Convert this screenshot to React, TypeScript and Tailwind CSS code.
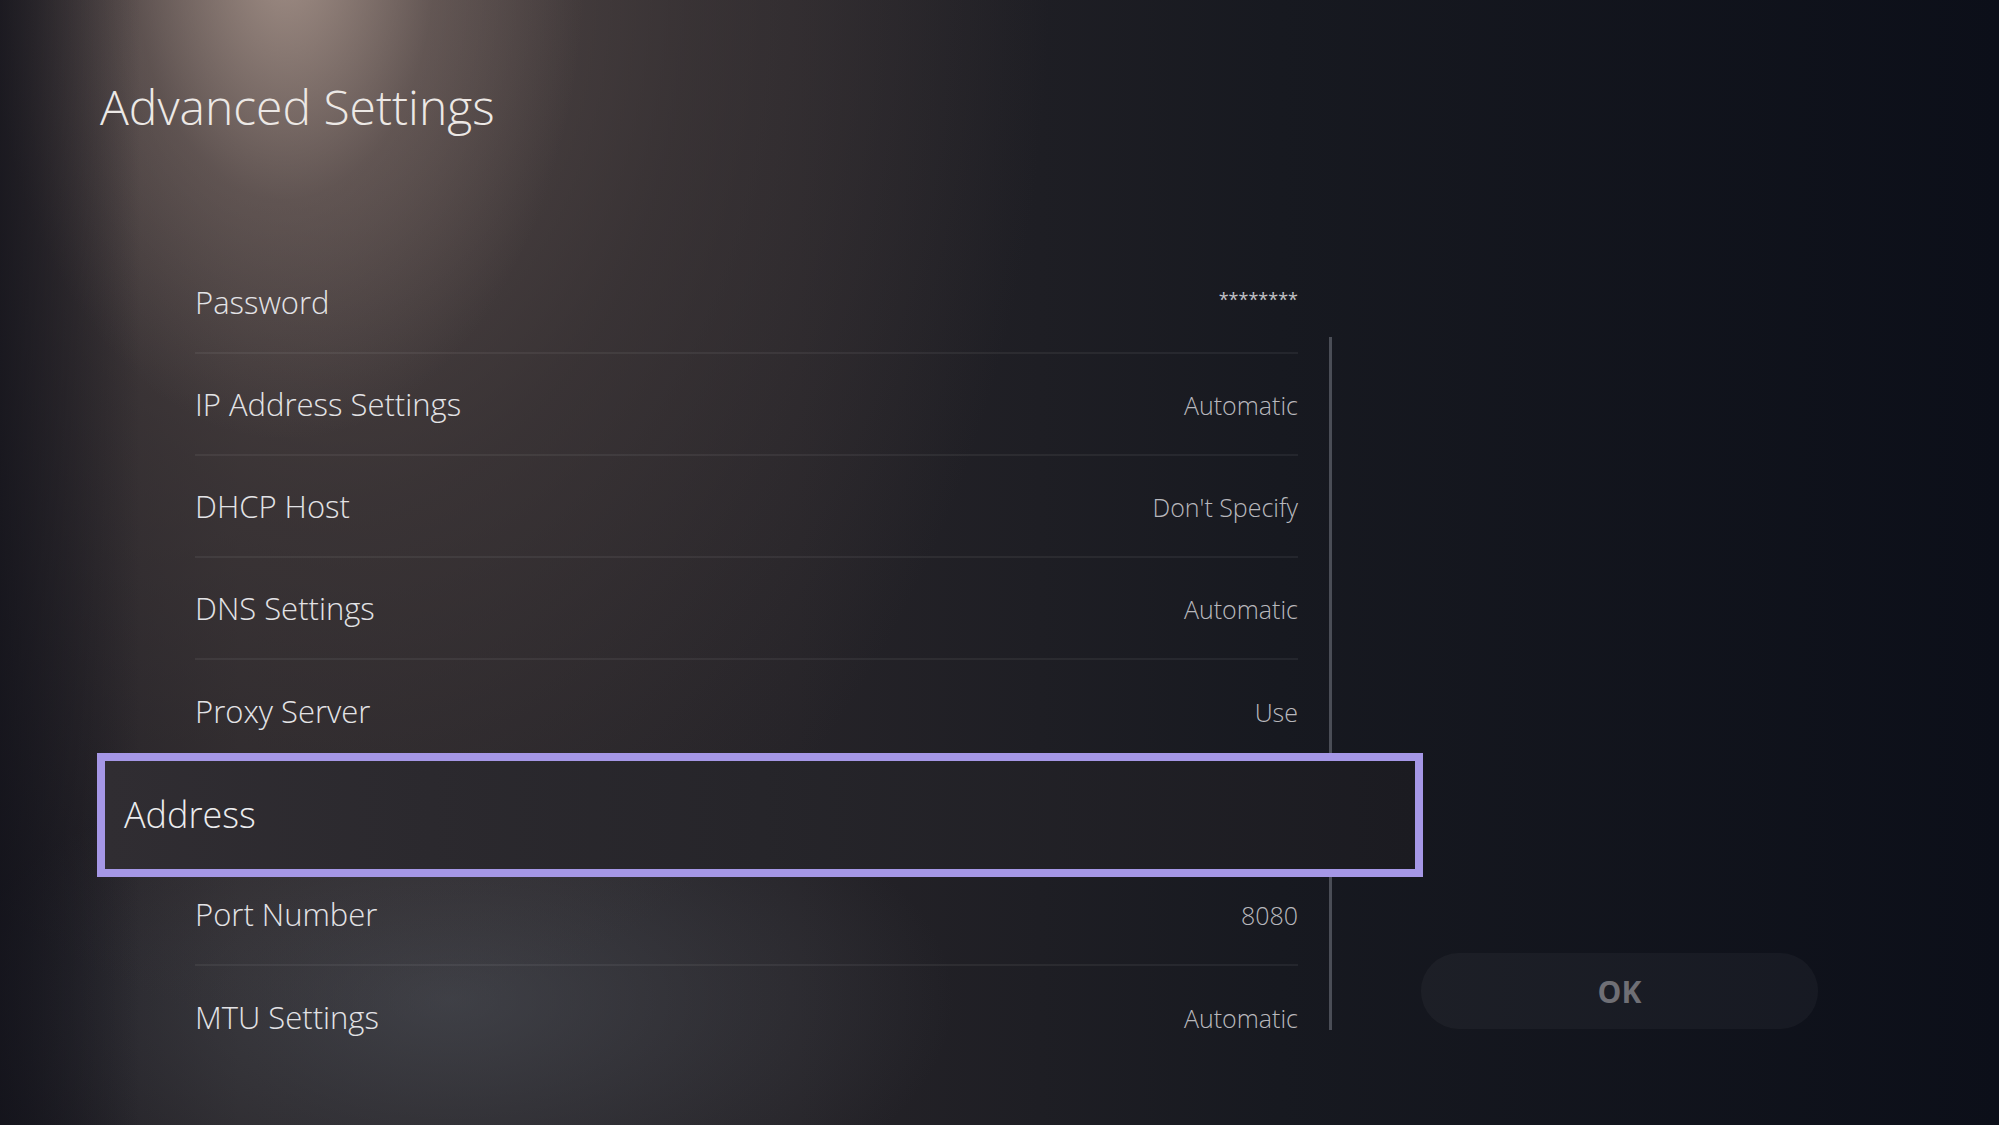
import React from 'react'

type Row = { label: string; value?: string; selected?: boolean; divider?: boolean }

const rows: Row[] = [
  { label: 'Password', value: '********', divider: true },
  { label: 'IP Address Settings', value: 'Automatic', divider: true },
  { label: 'DHCP Host', value: "Don't Specify", divider: true },
  { label: 'DNS Settings', value: 'Automatic', divider: true },
  { label: 'Proxy Server', value: 'Use' },
  { label: 'Address', selected: true },
  { label: 'Port Number', value: '8080', divider: true },
  { label: 'MTU Settings', value: 'Automatic' },
]

function SettingRow({ row }: { row: Row }) {
  if (row.selected) {
    return (
      <div className="relative z-10 -mt-[9px] -mb-[13px] flex h-[124px] items-center border-[8px] border-[#a597e6] bg-linear-to-r from-[#302d32] via-[#26252a] to-[#1b1b21] pl-[19px]">
        <span className="text-[36px] font-light text-[#ececee]">{row.label}</span>
      </div>
    )
  }
  const isMask = row.value === '********'
  return (
    <div className="h-[102px] pl-[98px] pr-[125px]">
      <div className={`flex h-full items-center justify-between ${row.divider ? 'border-b-2 border-white/[0.06]' : ''}`}>
        <span className="text-[31px] font-light text-[#e3e3e6]">{row.label}</span>
        {isMask ? (
          <span className="-mt-[6px] text-[18px] text-[#c4c4c8]">{row.value}</span>
        ) : (
          <span className="pt-[3px] text-[25px] font-light text-[#b8b8bd]">{row.value}</span>
        )}
      </div>
    </div>
  )
}

export default function App() {
  return (
    <div className="relative h-[1125px] w-[1999px] overflow-hidden bg-[linear-gradient(90deg,rgba(18,18,26,0.75)_0px,transparent_140px),radial-gradient(ellipse_300px_480px_at_285px_-40px,rgba(178,158,148,0.8)_0%,rgba(140,122,116,0.35)_50%,transparent_100%),radial-gradient(ellipse_720px_1050px_at_330px_-20px,rgba(96,83,80,0.8)_0%,rgba(72,63,63,0.55)_50%,transparent_100%),radial-gradient(ellipse_720px_360px_at_450px_1000px,rgba(82,86,94,0.55),transparent_70%),linear-gradient(90deg,#1d1c23_0%,#29262a_12%,#252328_40%,#171920_64%,#0c0f19_100%)] font-['Open_Sans','Noto_Sans',sans-serif]">
      <h1 className="pl-[100px] pt-[83px] text-[48px] font-light leading-none text-[#ece8e5]">
        Advanced Settings
      </h1>

      <div className="mt-[121px] flex">
        <div className="relative ml-[97px] w-[1326px]">
          {/* scroll track */}
          <div className="absolute left-[1232px] top-[85px] h-[693px] w-[3px] bg-[#4a4d56]" />
          {rows.map((row) => (
            <SettingRow key={row.label} row={row} />
          ))}
        </div>

        <div className="flex-1">
          <button className="-ml-[2px] mt-[701px] flex h-[76px] w-[397px] items-center justify-center rounded-full bg-white/[0.035] text-[30px] font-bold text-[#6f6f75]">
            OK
          </button>
        </div>
      </div>
    </div>
  )
}
